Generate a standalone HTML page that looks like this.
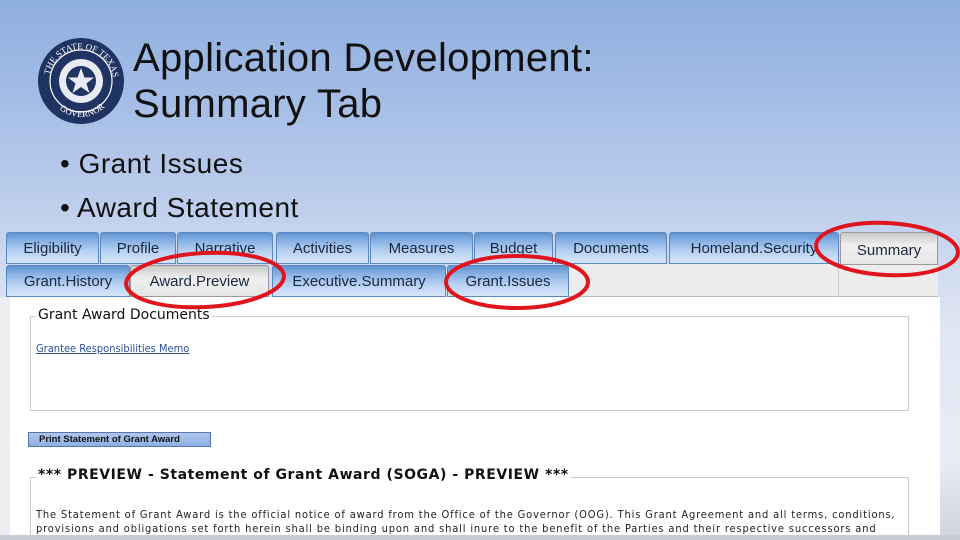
<!DOCTYPE html>
<html style="width:960px;height:540px;overflow:hidden"><head><style>
*{margin:0;padding:0;box-sizing:border-box}
body{width:960px;height:540px;overflow:hidden;position:relative;font-family:"Liberation Sans",sans-serif;background:linear-gradient(180deg,#8eaee0 0%,#b9cbeb 35%,#dfe6f3 60%,#e8edf6 85%,#cfd3da 100%)}
.t{position:absolute;font-family:"Liberation Sans",sans-serif;color:#111}
.tab{position:absolute;height:32px;border:1px solid #5d88bf;border-radius:3px 3px 0 0;background:linear-gradient(180deg,#5f92d0 0%,#8db5e6 30%,#b5d0f1 60%,#d7e6f8 100%);font-size:15px;color:#1a2740;text-align:center;line-height:32px;white-space:nowrap;overflow:hidden}
.g{background:linear-gradient(180deg,#c9c9c9,#efefef 40%,#e6e6e6);border-color:#999}
.fs{position:absolute;border:1px solid #c5ccd6;background:#fff}
.lg{position:absolute;background:#fff;padding:0 2px;color:#111}
</style></head><body>
<svg style="position:absolute;left:37px;top:37px" width="88" height="88" viewBox="0 0 88 88">
<circle cx="44" cy="44" r="43" fill="#1f3462"/>
<circle cx="44" cy="44" r="31" fill="none" stroke="#fff" stroke-width="1.2"/>
<circle cx="44" cy="44" r="22" fill="#e8ecf2"/>
<circle cx="44" cy="44" r="15" fill="#1f3462"/>
<polygon points="44,31 47.5,40.5 57,40.5 49.5,46.5 52.5,56 44,50 35.5,56 38.5,46.5 31,40.5 40.5,40.5" fill="#e8ecf2"/>
<path id="arc" d="M12,44 A32,32 0 0 1 76,44" fill="none"/>
<text font-family="Liberation Serif,serif" font-size="9" fill="#fff"><textPath href="#arc" startOffset="6%">THE STATE OF TEXAS</textPath></text>
<path id="arc2" d="M10,46 A34,34 0 0 0 78,46" fill="none"/>
<text font-family="Liberation Serif,serif" font-size="9" fill="#fff"><textPath href="#arc2" startOffset="28%">GOVERNOR</textPath></text>
</svg>
<div class="t" style="left:133px;top:35px;font-size:40px;line-height:46px;color:#111;letter-spacing:0.3px">Application Development:<br>Summary Tab</div>
<div class="t" style="left:60px;top:142px;font-size:28px;line-height:44px;letter-spacing:0.5px">• Grant Issues<br>• Award Statement</div>

<div style="position:absolute;left:0;top:297px;width:10px;height:238px;background:#eceef2"></div>
<div style="position:absolute;left:10px;top:297px;width:930px;height:238px;background:#fff;overflow:hidden"></div>
<div style="position:absolute;left:568px;top:264px;width:370px;height:33px;background:#ececec;border-bottom:1px solid #bbb"></div>
<div style="position:absolute;left:838px;top:264px;width:1px;height:33px;background:#ccc"></div>

<div class="tab" style="left:6px;top:232px;width:93px">Eligibility</div>
<div class="tab" style="left:100px;top:232px;width:76px">Profile</div>
<div class="tab" style="left:177px;top:232px;width:96px">Narrative</div>
<div class="tab" style="left:276px;top:232px;width:93px">Activities</div>
<div class="tab" style="left:370px;top:232px;width:103px">Measures</div>
<div class="tab" style="left:474px;top:232px;width:79px">Budget</div>
<div class="tab" style="left:555px;top:232px;width:112px">Documents</div>
<div class="tab" style="left:669px;top:232px;width:170px">Homeland.Security</div>
<div class="tab g" style="left:840px;top:232px;width:98px;height:33px;line-height:36px">Summary</div>
<div class="tab" style="left:6px;top:265px;width:124px">Grant.History</div>
<div class="tab g" style="left:130px;top:265px;width:139px">Award.Preview</div>
<div class="tab" style="left:272px;top:265px;width:174px">Executive.Summary</div>
<div class="tab" style="left:447px;top:265px;width:122px">Grant.Issues</div>

<div class="fs" style="left:30px;top:316px;width:879px;height:95px"></div>
<div class="lg" style="left:36px;top:307px;font-size:14px;font-family:'DejaVu Sans',sans-serif">Grant Award Documents</div>
<div class="t" style="left:36px;top:342px;font-size:11px;color:#2a4f9a;text-decoration:underline;font-family:'DejaVu Sans Condensed','DejaVu Sans',sans-serif">Grantee Responsibilities Memo</div>
<div style="position:absolute;left:28px;top:432px;width:183px;height:15px;background:linear-gradient(#aec6ee,#8fb0e4);border:1px solid #5577aa;font-size:9.5px;font-weight:bold;line-height:13px;padding-left:10px;color:#111">Print Statement of Grant Award</div>
<div class="fs" style="left:30px;top:477px;width:879px;height:58px;border-bottom:none"></div>
<div class="lg" style="left:36px;top:467px;font-size:14px;font-weight:bold;letter-spacing:0.55px;font-family:'DejaVu Sans','Liberation Sans',sans-serif">*** PREVIEW - Statement of Grant Award (SOGA) - PREVIEW ***</div>
<div class="t" style="left:36px;top:508px;font-size:11px;line-height:13.5px;color:#222;white-space:nowrap;letter-spacing:0.85px;font-family:'DejaVu Sans Condensed','DejaVu Sans',sans-serif">The Statement of Grant Award is the official notice of award from the Office of the Governor (OOG). This Grant Agreement and all terms, conditions,<br>provisions and obligations set forth herein shall be binding upon and shall inure to the benefit of the Parties and their respective successors and</div>
<div style="position:absolute;left:0;top:535px;width:960px;height:5px;background:#c9ccd2"></div>

<svg style="position:absolute;left:0;top:0" width="960" height="540">
<g fill="none" stroke="#e0141c" stroke-width="4">
<ellipse cx="205" cy="280" rx="79" ry="27" transform="rotate(-3 205 280)"/>
<ellipse cx="517" cy="282" rx="71" ry="26"/>
<ellipse cx="887" cy="249" rx="71" ry="26" transform="rotate(3 887 249)"/>
</g></svg>
</body></html>
